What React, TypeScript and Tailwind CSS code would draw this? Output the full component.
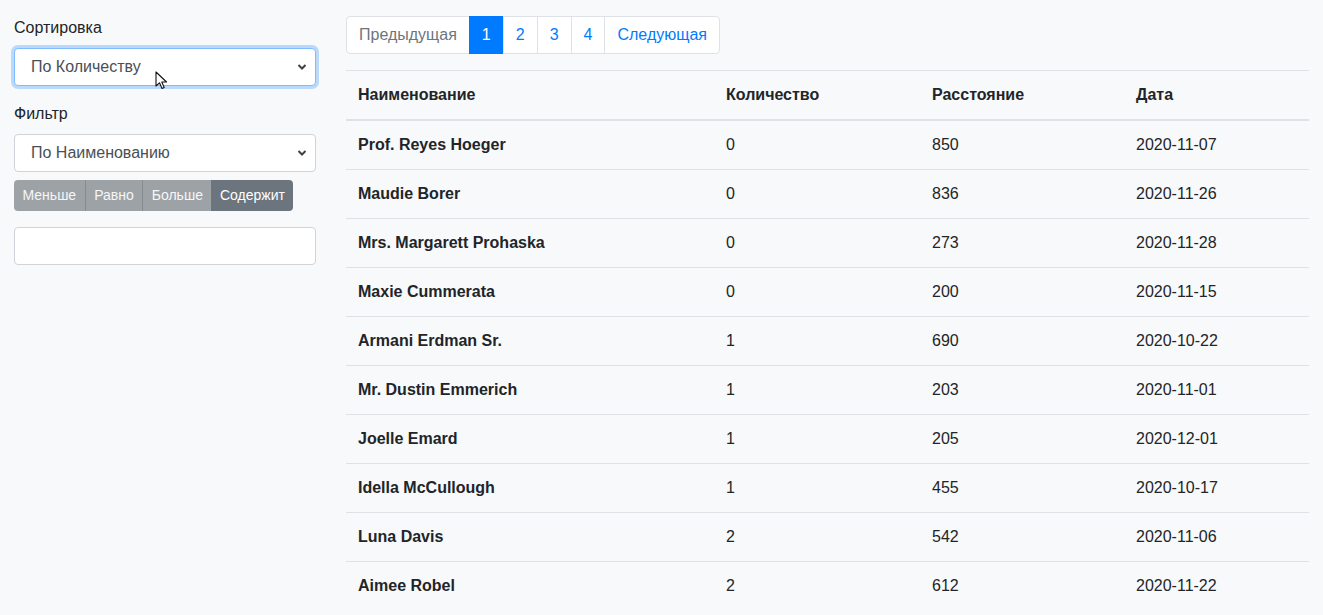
import React from 'react';

const rows = [
  { name: 'Prof. Reyes Hoeger', qty: 0, dist: 850, date: '2020-11-07' },
  { name: 'Maudie Borer', qty: 0, dist: 836, date: '2020-11-26' },
  { name: 'Mrs. Margarett Prohaska', qty: 0, dist: 273, date: '2020-11-28' },
  { name: 'Maxie Cummerata', qty: 0, dist: 200, date: '2020-11-15' },
  { name: 'Armani Erdman Sr.', qty: 1, dist: 690, date: '2020-10-22' },
  { name: 'Mr. Dustin Emmerich', qty: 1, dist: 203, date: '2020-11-01' },
  { name: 'Joelle Emard', qty: 1, dist: 205, date: '2020-12-01' },
  { name: 'Idella McCullough', qty: 1, dist: 455, date: '2020-10-17' },
  { name: 'Luna Davis', qty: 2, dist: 542, date: '2020-11-06' },
  { name: 'Aimee Robel', qty: 2, dist: 612, date: '2020-11-22' },
];

const Chevron = () => (
  <svg width="10" height="7" viewBox="0 0 10 7" className="absolute right-[9px] top-1/2 -translate-y-1/2 pointer-events-none">
    <path d="M1.5 1.5 L5 5 L8.5 1.5" fill="none" stroke="#3d4248" strokeWidth="2" />
  </svg>
);

const Cursor = () => (
  <svg width="14" height="20" viewBox="0 0 14 20" className="absolute left-[155px] top-[71px] pointer-events-none">
    <path d="M1 1 L1 15 L4.5 11.8 L7 17.5 L9.2 16.5 L6.8 11 L11.5 11 Z" fill="#fff" stroke="#111" strokeWidth="1.1" strokeLinejoin="round" />
  </svg>
);

export default function App() {
  return (
    <div className="min-h-screen bg-[#f8f9fa] text-[#212529] font-['Liberation_Sans',Arial,sans-serif] text-base">
      <div className="flex">
        {/* Sidebar */}
        <div className="relative w-[331px] shrink-0 pl-[14px] pr-[15px] pt-[16px]">
          <label className="block leading-6 mb-2">Сортировка</label>
          <div className="relative mb-4">
            <div className="h-[38px] w-full rounded border border-[#80bdff] bg-white shadow-[0_0_0_3px_rgba(0,123,255,0.25)] flex items-center pl-[16px] text-[#495057]">
              По Количеству
            </div>
            <Chevron />
          </div>
          <label className="block leading-6 mb-2">Фильтр</label>
          <div className="relative mb-[8px]">
            <div className="h-[38px] w-full rounded border border-[#ced4da] bg-white flex items-center pl-[16px] text-[#495057]">
              По Наименованию
            </div>
            <Chevron />
          </div>
          <div className="flex text-sm leading-[21px] text-white mb-4">
            <span className="h-[31px] px-[8.5px] flex items-center bg-[#9da2a7] rounded-l border-r border-[#868b91] text-white/90">Меньше</span>
            <span className="h-[31px] px-[8.5px] flex items-center bg-[#9da2a7] border-r border-[#868b91] text-white/90">Равно</span>
            <span className="h-[31px] px-[8.5px] flex items-center bg-[#9da2a7] text-white/90">Больше</span>
            <span className="h-[31px] px-[8.5px] flex items-center bg-[#6c757d] rounded-r">Содержит</span>
          </div>
          <div className="h-[38px] w-full rounded border border-[#ced4da] bg-white" />
          <Cursor />
        </div>

        {/* Main */}
        <div className="flex-1 pl-[15px] pr-[14px] pt-4">
          <div className="flex mb-4 leading-6">
            <span className="h-[38px] px-3 flex items-center border border-[#dee2e6] bg-white rounded-l text-[#6c757d]">Предыдущая</span>
            <span className="h-[38px] px-3 flex items-center border border-[#007bff] bg-[#007bff] text-white -ml-px">1</span>
            <span className="h-[38px] px-3 flex items-center border border-[#dee2e6] bg-white text-[#007bff] -ml-px">2</span>
            <span className="h-[38px] px-3 flex items-center border border-[#dee2e6] bg-white text-[#007bff] -ml-px">3</span>
            <span className="h-[38px] px-3 flex items-center border border-[#dee2e6] bg-white text-[#007bff] -ml-px">4</span>
            <span className="h-[38px] px-3 flex items-center border border-[#dee2e6] bg-white rounded-r text-[#007bff] -ml-px">Следующая</span>
          </div>
          <table className="w-full border-collapse text-left leading-6">
            <thead>
              <tr>
                <th className="w-[368px] p-3 border-t border-b-2 border-[#dee2e6] font-bold">Наименование</th>
                <th className="w-[206px] p-3 border-t border-b-2 border-[#dee2e6] font-bold">Количество</th>
                <th className="w-[204px] p-3 border-t border-b-2 border-[#dee2e6] font-bold">Расстояние</th>
                <th className="p-3 border-t border-b-2 border-[#dee2e6] font-bold">Дата</th>
              </tr>
            </thead>
            <tbody>
              {rows.map((r, i) => (
                <tr key={r.name}>
                  <th className={`p-3 font-bold ${i > 0 ? 'border-t border-[#dee2e6]' : ''}`}>{r.name}</th>
                  <td className={`p-3 ${i > 0 ? 'border-t border-[#dee2e6]' : ''}`}>{r.qty}</td>
                  <td className={`p-3 ${i > 0 ? 'border-t border-[#dee2e6]' : ''}`}>{r.dist}</td>
                  <td className={`p-3 ${i > 0 ? 'border-t border-[#dee2e6]' : ''}`}>{r.date}</td>
                </tr>
              ))}
            </tbody>
          </table>
        </div>
      </div>
    </div>
  );
}
